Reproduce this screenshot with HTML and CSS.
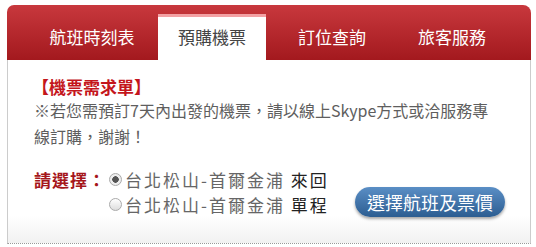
FILE: index.html
```html
<!DOCTYPE html>
<html lang="zh-Hant">
<head>
  <meta charset="UTF-8">
  <meta name="viewport" content="width=device-width, initial-scale=1.0">
  <title>預購機票</title>
  <link rel="stylesheet" href="styles.css">
</head>
<body>
  <div class="booking-box">
    <ul class="tabs">
      <li class="tab">航班時刻表</li>
      <li class="tab active">預購機票</li>
      <li class="tab">訂位查詢</li>
      <li class="tab">旅客服務</li>
    </ul>
    <div class="panel">
      <h2 class="panel-title">【機票需求單】</h2>
      <p class="notice">※若您需預訂7天內出發的機票，請以線上Skype方式或洽服務專線訂購，謝謝！</p>
      <form class="route-form">
        <span class="label">請選擇：</span>
        <div class="options">
          <label class="option"><input type="radio" name="route" checked>台北松山-首爾金浦 <b>來回</b></label>
          <label class="option"><input type="radio" name="route">台北松山-首爾金浦 <b>單程</b></label>
        </div>
        <button type="button" class="search-btn">選擇航班及票價</button>
      </form>
    </div>
  </div>
</body>
</html>
```

FILE: styles.css
```css
* {
  margin: 0;
  padding: 0;
  box-sizing: border-box;
}

body {
  font-family: "Noto Sans CJK TC", "Liberation Sans", sans-serif;
  background-color: #fff;
}

.booking-box {
  width: 524px;
  margin: 5px 0 0 7px;
}

.tabs {
  list-style: none;
  display: flex;
  gap: 12px;
  height: 55px;
  padding: 9px 0 0 31px;
  border-radius: 7px 8px 0 0;
  background: linear-gradient(#c8383d, #a3191e);
}

.tab {
  width: 108px;
  height: 46px;
  padding-top: 8px;
  text-align: center;
  font-size: 17px;
  line-height: 30px;
  color: #fff;
  cursor: pointer;
}

.tab.active {
  background-color: #fff;
  border-top: 3px solid #f3a1a4;
  padding-top: 5px;
  color: #444;
}

.panel {
  padding: 15px 25px 26px 26px;
  border-left: 1px solid #ccc;
  border-right: 1px solid #ccc;
  border-bottom: 1px dotted #999;
  background: linear-gradient(#fff 155px, #f1f1f1);
}

.panel-title {
  font-size: 17px;
  line-height: 25px;
  font-weight: bold;
  color: #c4161c;
  margin: -1px 0 -2px -2px;
}

.notice {
  max-width: 462px;
  font-size: 16px;
  line-height: 26px;
  color: #5e5e5e;
}

.route-form {
  display: flex;
  align-items: flex-start;
  margin-top: 18px;
}

.label {
  font-size: 17px;
  line-height: 25px;
  font-weight: bold;
  letter-spacing: 1px;
  color: #a5161b;
}

.options {
  display: flex;
  flex-direction: column;
}

.option {
  display: flex;
  align-items: center;
  font-size: 17px;
  line-height: 25px;
  letter-spacing: 2px;
  color: #666;
  white-space: pre;
}

.option b {
  font-weight: normal;
  color: #222;
}

.option input {
  appearance: none;
  width: 13px;
  height: 13px;
  margin: 0 3px 0 3px;
  border: 1px solid #aaa;
  border-radius: 50%;
  background: linear-gradient(#fff, #ddd);
}

.option input:checked {
  background: radial-gradient(circle, #555 0 3px, #eee 3.5px);
}

.search-btn {
  margin: 20px 0 0 auto;
  width: 150px;
  height: 30px;
  border: none;
  border-radius: 15px;
  background: linear-gradient(#5a8ec5, #2c5d91);
  box-shadow: 0 2px 3px rgba(0, 0, 0, 0.35);
  font-family: inherit;
  font-size: 18px;
  line-height: 30px;
  color: #fff;
  cursor: pointer;
}
```
